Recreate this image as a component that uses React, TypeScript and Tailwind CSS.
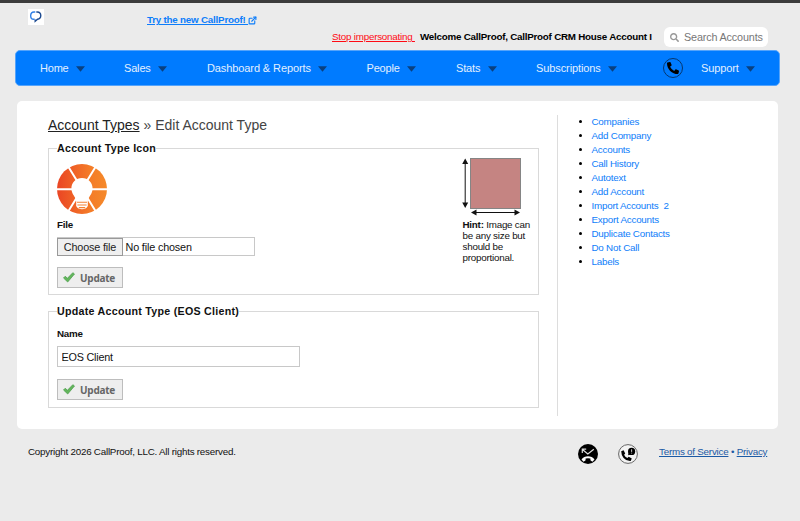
import React from 'react';
import { FaPhoneAlt, FaSearch } from 'react-icons/fa';
import { FiExternalLink } from 'react-icons/fi';

interface NavEntry {
  label: string;
  className: string;
}

const navItems: NavEntry[] = [
  { label: 'Home', className: 'w-[84px] tracking-[-0.2px]' },
  { label: 'Sales', className: 'w-[83px] tracking-[-0.17px]' },
  { label: 'Dashboard & Reports', className: 'w-[159.5px] tracking-[-0.1px]' },
  { label: 'People', className: 'w-[89.5px] tracking-[-0.17px]' },
  { label: 'Stats', className: 'w-[80px] tracking-[-0.17px]' },
  { label: 'Subscriptions', className: 'w-[127px] tracking-[-0.1px]' },
];

const sideLinks = [
  'Companies',
  'Add Company',
  'Accounts',
  'Call History',
  'Autotext',
  'Add Account',
  'Import Accounts\u00a0 2',
  'Export Accounts',
  'Duplicate Contacts',
  'Do Not Call',
  'Labels',
];

const Caret = () => (
  <svg width="9" height="6" viewBox="0 0 9 6" className="mt-px shrink-0">
    <path d="M0 0.3H9L4.5 5.7Z" fill="#0a4080" />
  </svg>
);

const Logo = () => (
  <svg width="16" height="16" viewBox="0 0 16 16" className="ml-7 bg-white" fill="none" strokeWidth="1.4">
    <path d="M6.6 10.3H5.8C1.6 10.1 1.6 3.2 6 3H7.3" stroke="#2f7fe6" />
    <path d="M8.3 3H9.3C13.9 3.2 13.9 9.6 9.5 10.2L7.2 12.2V10.6" stroke="#1d4b91" />
  </svg>
);

const BulbWheel = () => (
  <svg width="50" height="50" viewBox="0 0 50 50" className="block">
    <defs>
      <linearGradient id="wheel" x1="0" y1="0" x2="1" y2="0">
        <stop offset="0" stopColor="#ea4524" />
        <stop offset="0.65" stopColor="#f47b28" />
        <stop offset="1" stopColor="#f58a2a" />
      </linearGradient>
    </defs>
    <circle cx="25" cy="25" r="25" fill="url(#wheel)" />
    <path d="M0 25.2H50M11.5 3L38.5 47M38.5 3L11.5 47" stroke="#fff" strokeWidth="2" />
    <path d="M25 14C31 14 35.6 18.7 35.6 24.4C35.6 30.5 31.2 32 30.8 37.5V42Q29 45.2 25 45.2Q21 45.2 19.2 42V37.5C18.8 32 14.4 30.5 14.4 24.4C14.4 18.7 19 14 25 14Z" fill="#fff" />
    <path d="M20 38.3H30M20.4 41H29.6M21.8 43.6H28.2" stroke="#f58235" strokeWidth="1.1" />
  </svg>
);

const SizeHint = () => (
  <svg width="60" height="60" viewBox="0 0 60 60" className="block">
    <rect x="8.5" y="1.5" width="50" height="50" fill="#c58482" stroke="#858585" />
    <path d="M3.2 4V48" stroke="#111" />
    <path d="M3.2 1.5L6.2 7H0.2ZM3.2 51L6.2 45.5H0.2Z" fill="#111" />
    <path d="M12 55.5H55" stroke="#111" />
    <path d="M9 55.5L14.5 52.5V58.5ZM58 55.5L52.5 52.5V58.5Z" fill="#111" />
  </svg>
);

const UpdateButton = () => (
  <button className="flex h-[21px] w-[66px] items-center gap-[5px] border border-[#bdbdbd] bg-[#eee] pl-[5px] font-['Noto_Sans','Open_Sans',sans-serif] text-[10px] font-bold tracking-[-0.25px] text-[#666]">
    <svg width="12" height="11" viewBox="0 0 12 11" className="shrink-0">
      <path d="M0.5 6L2.3 4.2L4.4 6.3L9.8 0.7L11.5 2L4.7 10Z" fill="#63b65c" stroke="#479b48" strokeWidth="0.7" />
    </svg>
    Update
  </button>
);

const MissedCall = () => (
  <svg width="20" height="20" viewBox="0 0 20 20" className="shrink-0">
    <circle cx="10" cy="10" r="10" fill="#000" />
    <path d="M4.5 5.5L9.8 10L15.8 5.2M4.3 9V5.2H8.2" fill="none" stroke="#ddd" strokeWidth="1.2" />
    <path d="M3.5 15.4C6.5 11.3 13.5 11.3 16.5 15.4L14.4 17.8L12.4 16.3V14.6Q10 14 7.6 14.6V16.3L5.6 17.8Z" fill="#fff" />
  </svg>
);

const CallAlert = () => (
  <svg width="20" height="20" viewBox="0 0 20 20" className="shrink-0">
    <circle cx="10" cy="10" r="9.4" fill="#f3f3f3" stroke="#666" />
    <path d="M3.2 7.2L5.6 6.2L7.2 9.6L6.1 10.8Q7 13 9.4 14L10.7 12.7L13.8 14.6L12.7 17.1Q8.5 17.4 5.6 14Q3.2 11 3.2 7.2Z" fill="#000" />
    <circle cx="13.6" cy="7.4" r="3.6" fill="#000" />
    <path d="M10.8 8.5L10 11.3L13 10.5Z" fill="#000" />
    <path d="M13.6 5.3V7.9M13.6 8.7V9.5" stroke="#ddd" strokeWidth="0.9" />
  </svg>
);

export default function App() {
  return (
    <div className="h-[521px] w-[800px] overflow-hidden border-t-[3px] border-[#3c3c3c] bg-[#ebebeb] font-['Liberation_Sans',Arial,sans-serif] text-[9.8px] leading-[12px] tracking-[-0.22px] text-[#111] whitespace-nowrap">
      <header className="h-[47px]">
        <div className="flex h-6 items-start pt-[6px]">
          <Logo />
          <a className="mt-[5px] ml-[103px] flex items-center font-bold text-[#0d7dfa]">
            <span className="underline">Try the new CallProof!&nbsp;</span>
            <FiExternalLink className="size-[9px]" strokeWidth={3} />
          </a>
        </div>
        <div className="flex h-5 items-center pl-[332px]">
          <a className="w-[88px] text-[#ff0a14] underline">Stop impersonating&nbsp;</a>
          <b className="w-[244px] tracking-[-0.23px] text-black">Welcome CallProof, CallProof CRM House Account I</b>
          <div className="flex h-5 w-[104px] items-center gap-[5px] rounded-md bg-white pl-[6px] text-[10.8px] tracking-[-0.15px] text-[#777]">
            <FaSearch className="size-[9px] text-[#999]" />
            Search Accounts
          </div>
        </div>
      </header>

      <nav className="mr-5 ml-[15px] flex h-[36px] items-center rounded-[5px] border border-[#55a4fb] bg-[#007bff] pl-[24px] text-[11px] text-[#e2effe]">
        {navItems.map((item) => (
          <a key={item.label} className={`flex items-center gap-[7.5px] ${item.className}`}>
            {item.label}
            <Caret />
          </a>
        ))}
        <span className="flex size-5 items-center justify-center rounded-full border border-[#06366e]">
          <FaPhoneAlt className="size-[12px] text-black" />
        </span>
        <a className="ml-[18px] flex items-center gap-[7.5px] tracking-[-0.1px]">
          Support
          <Caret />
        </a>
      </nav>

      <main className="mt-[15px] ml-[17px] flex h-[328px] w-[761px] rounded-[5px] bg-white">
        <section className="w-[522px] pl-[31px]">
          <h1 className="mt-[15px] h-[32px] text-[14px] leading-[18px] tracking-normal text-[#444]">
            <a className="text-[#222] underline">Account Types</a> » Edit Account Type
          </h1>
          <fieldset className="-mt-[6px] flex h-[153px] justify-between border border-[#d9d9d9] pl-2">
            <legend className="h-[13px] text-[10.67px] font-bold leading-[13px] tracking-[0.27px] text-[#111]">Account Type Icon</legend>
            <div className="pt-[9px]">
              <BulbWheel />
              <label className="mt-[5px] block font-bold">File</label>
              <div className="mt-[6px] flex h-[19px] w-[198px] items-center border border-[#c8c8c8] text-[10.8px] tracking-[-0.15px]">
                <button className="-ml-px h-[18px] w-[66px] border border-[#999] bg-[#efefef] text-[#222]">Choose file</button>
                <span className="ml-[2.5px]">No file chosen</span>
              </div>
              <div className="mt-[11px]">
                <UpdateButton />
              </div>
            </div>
            <div className="w-[76px] pt-[2px]">
              <SizeHint />
              <p className="mt-[2px] ml-[0.5px] leading-[11px]">
                <b>Hint:</b> Image can<br />be any size but<br />should be<br />proportional.
              </p>
            </div>
          </fieldset>
          <fieldset className="mt-[10px] h-[103px] border border-[#d9d9d9] pl-2">
            <legend className="h-[13px] text-[10.67px] font-bold leading-[13px] tracking-[0.27px] text-[#111]">Update Account Type (EOS Client)</legend>
            <label className="mt-[10px] block font-bold">Name</label>
            <input defaultValue="EOS Client" className="mt-[6px] block h-[21px] w-[243px] border border-[#c8c8c8] px-[3.5px] text-[10.8px] tracking-[-0.2px]" />
            <div className="mt-3">
              <UpdateButton />
            </div>
          </fieldset>
        </section>
        <aside className="mt-[14px] ml-[18px] h-[301px] border-l border-[#ddd] pl-[33.5px]">
          <ul className="list-disc leading-[14px] text-black">
            {sideLinks.map((link) => (
              <li key={link}>
                <a className="text-[#0d7dfa]">{link}</a>
              </li>
            ))}
          </ul>
        </aside>
      </main>

      <footer className="flex pt-[15px] pl-7">
        <span className="mt-[2px] w-[550px]">Copyright 2026 CallProof, LLC. All rights reserved.</span>
        <MissedCall />
        <span className="w-5" />
        <CallAlert />
        <span className="mt-[2px] ml-[21px] text-[#1c5aa5]">
          <a className="underline">Terms of Service</a> • <a className="underline">Privacy</a>
        </span>
      </footer>
    </div>
  );
}
